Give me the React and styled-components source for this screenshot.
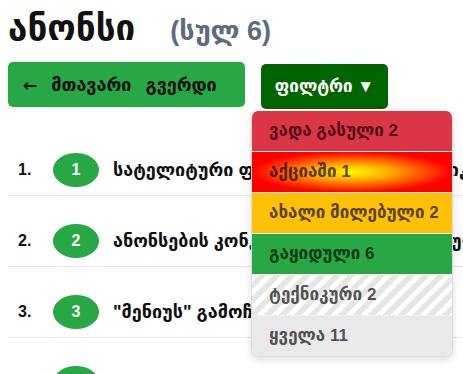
import React from 'react';
import styled, { createGlobalStyle } from 'styled-components';

const Global = createGlobalStyle`
  html, body {
    margin: 0;
    overflow: hidden;
    background: #fff;
  }
  body {
    padding: 8px;
    font-family: "Liberation Sans", "DejaVu Sans", sans-serif;
    color: #111;
  }
`;

const Header = styled.div`
  display: flex;
  align-items: baseline;
  height: 44px;
`;

const Title = styled.h1`
  margin: 0;
  font-size: 35px;
  font-weight: bold;
  line-height: 40px;
`;

const Count = styled.span`
  margin-left: 35px;
  font-size: 27px;
  font-weight: bold;
  color: #5c6c7e;
`;

const Toolbar = styled.div`
  display: flex;
  align-items: flex-start;
  gap: 16px;
  margin-top: 10px;
`;

const BackButton = styled.button`
  width: 237px;
  height: 45px;
  border: none;
  border-radius: 5px;
  background: #28a745;
  color: #111;
  font-family: inherit;
  font-size: 18px;
  font-weight: bold;
  word-spacing: 9px;
  padding: 0 0 0 15px;
  text-align: left;
  white-space: nowrap;
`;

const Arrow = styled.span`
  font-family: "DejaVu Sans", sans-serif;
  font-weight: bold;
  font-size: 17px;
`;

const FilterWrap = styled.div`
  position: relative;
  margin-top: 2px;
`;

const FilterButton = styled.button`
  width: 127px;
  height: 45px;
  border: none;
  border-radius: 5px;
  background: #006400;
  color: #fff;
  font-family: inherit;
  font-size: 17px;
  font-weight: bold;
`;

const Menu = styled.ul`
  position: absolute;
  top: 47px;
  left: -10px;
  width: 200px;
  margin: 0;
  padding: 0;
  list-style: none;
  border: 1px solid #ddd;
  border-top: none;
  border-radius: 7px;
  overflow: hidden;
  box-shadow: 0 3px 8px rgba(0, 0, 0, 0.12);
  z-index: 5;
`;

const backgrounds = {
  expired: '#dc3545',
  sale: 'radial-gradient(closest-side, #ffff00, #ff9a00 45%, #ff0000)',
  new: '#ffc107',
  sold: '#28a745',
  tech: 'repeating-linear-gradient(135deg, #fff 0 5px, #e6e6e6 5px 10.5px)',
  all: '#e9e9e9',
};

const MenuItem = styled.li`
  height: 40px;
  line-height: 40px;
  padding-left: 17px;
  font-size: 17px;
  font-weight: bold;
  color: rgba(0, 0, 0, 0.68);
  background: ${(p) => backgrounds[p.$kind]};
  border-bottom: ${(p) => (p.$kind === 'all' ? 'none' : '1px solid #f3f3f3')};
`;

const List = styled.ol`
  margin: 16px 0 0;
  padding: 0;
  list-style: none;
  width: 700px;
`;

const Row = styled.li`
  display: flex;
  align-items: center;
  padding: 28px 10px 8px;
  border-bottom: 1px solid #e8e8e8;
  white-space: nowrap;
`;

const Num = styled.span`
  width: 35px;
  font-size: 16px;
  font-weight: bold;
`;

const Badge = styled.span`
  width: 46px;
  height: 34px;
  border-radius: 50%;
  background: #28a745;
  color: #fff;
  font-size: 16px;
  font-weight: bold;
  display: flex;
  align-items: center;
  justify-content: center;
  margin-right: 14px;
`;

const RowText = styled.span`
  font-size: 18px;
  font-weight: bold;
`;

const filters = [
  ['expired', 'ვადა გასული 2'],
  ['sale', 'აქციაში 1'],
  ['new', 'ახალი მილებული 2'],
  ['sold', 'გაყიდული 6'],
  ['tech', 'ტექნიკური 2'],
  ['all', 'ყველა 11'],
];

const rows = [
  'სატელიტური ფოტოების ახალი ტექნიკა',
  'ანონსების კონკურსი დაიწყო გაზაფხულზე',
  '"მენიუს" გამოჩენა ახალ შენობაში',
  'ახალი პროდუქტის პრეზენტაცია თბილისში',
];

export default function App() {
  return (
    <>
      <Global />
      <Header>
        <Title>ანონსი</Title>
        <Count>(სულ 6)</Count>
      </Header>
      <Toolbar>
        <BackButton>
          <Arrow>←</Arrow> მთავარი გვერდი
        </BackButton>
        <FilterWrap>
          <FilterButton>ფილტრი ▼</FilterButton>
          <Menu>
            {filters.map(([kind, label]) => (
              <MenuItem key={kind} $kind={kind}>{label}</MenuItem>
            ))}
          </Menu>
        </FilterWrap>
      </Toolbar>
      <List>
        {rows.map((text, i) => (
          <Row key={i}>
            <Num>{i + 1}.</Num>
            <Badge>{i + 1}</Badge>
            <RowText>{text}</RowText>
          </Row>
        ))}
      </List>
    </>
  );
}
